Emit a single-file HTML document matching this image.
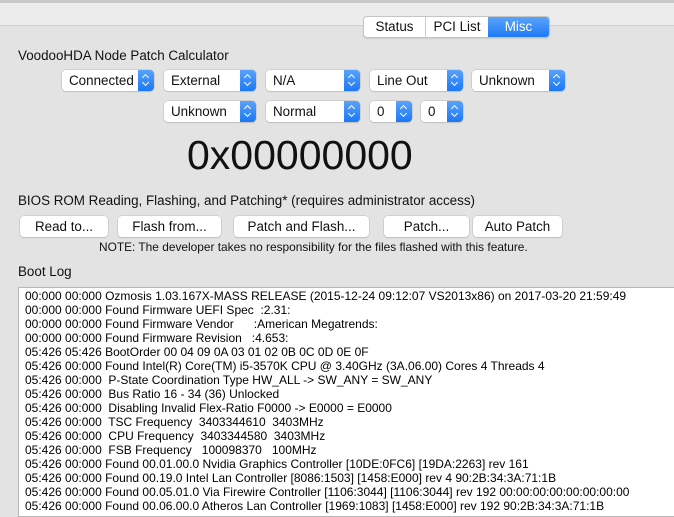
<!DOCTYPE html>
<html><head><style>
body{margin:0;width:674px;height:513px;overflow:hidden;background:#e3e3e3;font-family:"Liberation Sans",sans-serif;font-size:13.4px;color:#111;position:relative}
.a{position:absolute;white-space:nowrap}
.top{position:absolute;left:0;top:0;width:674px;height:26px;background:#ececec;border-top:3px solid #c8c8c8;box-sizing:border-box;border-bottom:1px solid #d0d0d0}
.tabs{position:absolute;left:363px;top:16px;height:20px;display:flex;border:1px solid #c5c5c5;border-radius:4px;overflow:hidden;background:#fff;font-size:13.4px;box-shadow:0 1px 1px rgba(0,0,0,.1)}
.tabs div{line-height:20px;text-align:center}
.pop{position:absolute;height:21px;background:#fff;border-radius:4px;box-shadow:0 0 0 0.5px #bcbcbc,0 1px 1px rgba(0,0,0,.15);line-height:21px;font-size:13.4px;box-sizing:border-box;padding-left:7px}
.pop i{position:absolute;right:0;top:0;width:16px;height:21px;background:linear-gradient(#59a2fb,#1b78f5);border-radius:0 4px 4px 0}
.pop i:before,.pop i:after{content:"";position:absolute;left:5px;width:4px;height:4px;border:solid #fff;border-width:1.3px 1.3px 0 0}
.pop i:before{top:5px;transform:rotate(-45deg)}
.pop i:after{top:10px;transform:rotate(135deg)}
.btn{position:absolute;top:216px;height:21px;background:#fff;border-radius:4px;box-shadow:0 0 0 0.5px #bcbcbc,0 1px 1px rgba(0,0,0,.15);line-height:21px;text-align:center;font-size:13.4px}
.log{position:absolute;left:18px;top:287px;width:660px;height:230px;background:#fff;border:1px solid #b8b8b8;box-sizing:border-box;padding:1px 0 0 6px;font-size:12px;line-height:14px;white-space:pre;color:#000}
</style></head><body>
<div class="top"></div>
<div class="tabs"><div style="width:61px;border-right:1px solid #ccc">Status</div><div style="width:62px">PCI List</div><div style="width:61px;background:linear-gradient(#5aa3fb,#1e7af5);color:#fff">Misc</div></div>
<div class="a" style="left:18px;top:48px">VoodooHDA Node Patch Calculator</div>
<div class="pop" style="left:62px;top:70px;width:92px">Connected<i></i></div>
<div class="pop" style="left:164px;top:70px;width:92px">External<i></i></div>
<div class="pop" style="left:266px;top:70px;width:94px">N/A<i></i></div>
<div class="pop" style="left:370px;top:70px;width:93px">Line Out<i></i></div>
<div class="pop" style="left:472px;top:70px;width:93px">Unknown<i></i></div>
<div class="pop" style="left:164px;top:101px;width:92px">Unknown<i></i></div>
<div class="pop" style="left:266px;top:101px;width:94px">Normal<i></i></div>
<div class="pop" style="left:370px;top:101px;width:42px">0<i></i></div>
<div class="pop" style="left:421px;top:101px;width:42px">0<i></i></div>
<div class="a" style="left:187px;top:132px;font-size:41px;line-height:46px">0x00000000</div>
<div class="a" style="left:18px;top:193px">BIOS ROM Reading, Flashing, and Patching* (requires administrator access)</div>
<div class="btn" style="left:20px;width:88px">Read to...</div>
<div class="btn" style="left:118px;width:103px">Flash from...</div>
<div class="btn" style="left:234px;width:135px">Patch and Flash...</div>
<div class="btn" style="left:384px;width:85px">Patch...</div>
<div class="btn" style="left:473px;width:89px">Auto Patch</div>
<div class="a" style="left:99px;top:240px;font-size:11.9px">NOTE: The developer takes no responsibility for the files flashed with this feature.</div>
<div class="a" style="left:18px;top:264px">Boot Log</div>
<div class="log">00:000 00:000 Ozmosis 1.03.167X-MASS RELEASE (2015-12-24 09:12:07 VS2013x86) on 2017-03-20 21:59:49
00:000 00:000 Found Firmware UEFI Spec  :2.31:
00:000 00:000 Found Firmware Vendor      :American Megatrends:
00:000 00:000 Found Firmware Revision   :4.653:
05:426 05:426 BootOrder 00 04 09 0A 03 01 02 0B 0C 0D 0E 0F
05:426 00:000 Found Intel(R) Core(TM) i5-3570K CPU @ 3.40GHz (3A.06.00) Cores 4 Threads 4
05:426 00:000  P-State Coordination Type HW_ALL -&gt; SW_ANY = SW_ANY
05:426 00:000  Bus Ratio 16 - 34 (36) Unlocked
05:426 00:000  Disabling Invalid Flex-Ratio F0000 -&gt; E0000 = E0000
05:426 00:000  TSC Frequency  3403344610  3403MHz
05:426 00:000  CPU Frequency  3403344580  3403MHz
05:426 00:000  FSB Frequency   100098370   100MHz
05:426 00:000 Found 00.01.00.0 Nvidia Graphics Controller [10DE:0FC6] [19DA:2263] rev 161
05:426 00:000 Found 00.19.0 Intel Lan Controller [8086:1503] [1458:E000] rev 4 90:2B:34:3A:71:1B
05:426 00:000 Found 00.05.01.0 Via Firewire Controller [1106:3044] [1106:3044] rev 192 00:00:00:00:00:00:00:00
05:426 00:000 Found 00.06.00.0 Atheros Lan Controller [1969:1083] [1458:E000] rev 192 90:2B:34:3A:71:1B</div>
</body></html>
